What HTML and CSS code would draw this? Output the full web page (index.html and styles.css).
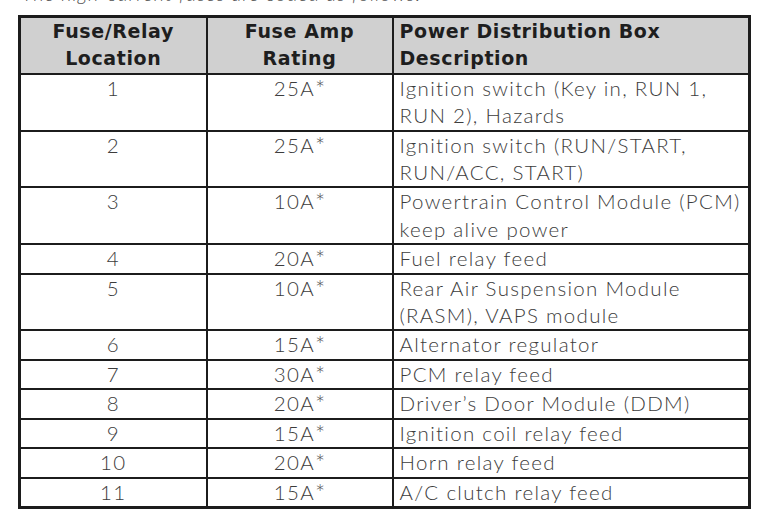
FILE: index.html
```html
<!DOCTYPE html>
<html>
<head>
<meta charset="utf-8">
<link rel="stylesheet" href="styles.css">
</head>
<body>
<p class="caption">The high-current fuses are coded as follows:</p>
<table class="fuses">
  <colgroup>
    <col class="c1"><col class="c2"><col class="c3">
  </colgroup>
  <thead>
    <tr>
      <th class="ctr">Fuse/Relay<br>Location</th>
      <th class="ctr">Fuse Amp<br>Rating</th>
      <th class="lft">Power Distribution Box<br>Description</th>
    </tr>
  </thead>
  <tbody>
    <tr><td class="ctr">1</td><td class="ctr">25A<span class="ast">*</span></td><td class="lft">Ignition switch (Key in, RUN 1,<br>RUN 2), Hazards</td></tr>
    <tr><td class="ctr">2</td><td class="ctr">25A<span class="ast">*</span></td><td class="lft">Ignition switch (RUN/START,<br>RUN/ACC, START)</td></tr>
    <tr><td class="ctr">3</td><td class="ctr">10A<span class="ast">*</span></td><td class="lft">Powertrain Control Module (PCM)<br>keep alive power</td></tr>
    <tr><td class="ctr">4</td><td class="ctr">20A<span class="ast">*</span></td><td class="lft">Fuel relay feed</td></tr>
    <tr><td class="ctr">5</td><td class="ctr">10A<span class="ast">*</span></td><td class="lft">Rear Air Suspension Module<br>(RASM), VAPS module</td></tr>
    <tr><td class="ctr">6</td><td class="ctr">15A<span class="ast">*</span></td><td class="lft">Alternator regulator</td></tr>
    <tr><td class="ctr">7</td><td class="ctr">30A<span class="ast">*</span></td><td class="lft">PCM relay feed</td></tr>
    <tr><td class="ctr">8</td><td class="ctr">20A<span class="ast">*</span></td><td class="lft">Driver’s Door Module (DDM)</td></tr>
    <tr><td class="ctr">9</td><td class="ctr">15A<span class="ast">*</span></td><td class="lft">Ignition coil relay feed</td></tr>
    <tr><td class="ctr">10</td><td class="ctr">20A<span class="ast">*</span></td><td class="lft">Horn relay feed</td></tr>
    <tr><td class="ctr">11</td><td class="ctr">15A<span class="ast">*</span></td><td class="lft">A/C clutch relay feed</td></tr>
  </tbody>
</table>
</body>
</html>
```
FILE: styles.css
```css
html, body {
  margin: 0;
  padding: 0;
  background: #ffffff;
}

body {
  font-family: Lato, "Liberation Sans", sans-serif;
  color: #3a3a3a;
}

.caption {
  margin: -17px 0 0 22px;
  height: 20px;
  font-size: 20px;
  line-height: 20px;
  font-style: italic;
  font-weight: 300;
  letter-spacing: 1px;
  color: #555;
}

.fuses {
  margin: 12px 0 0 18px;
  width: 733px;
  border-collapse: collapse;
  table-layout: fixed;
  border: 3px solid #1c1c1c;
}

.c1 { width: 187px; }
.c2 { width: 186px; }
.c3 { width: auto; }

.fuses th,
.fuses td {
  border: 2px solid #1c1c1c;
  padding: 0 6px;
  vertical-align: top;
  line-height: 27.4px;
}

.fuses th {
  background: #d0d0d0;
  font-family: "DejaVu Sans", sans-serif;
  font-weight: bold;
  font-size: 19px;
  color: #1e1e1e;
  letter-spacing: 0.6px;
}

.fuses td {
  font-family: Lato, "Liberation Sans", sans-serif;
  font-weight: 300;
  font-size: 20.5px;
  letter-spacing: 1.3px;
  color: #3c3c3c;
}

.ast {
  font-size: 24px;
  line-height: 0;
  letter-spacing: 0;
  position: relative;
  top: 2px;
  color: #555;
}

.ctr { text-align: center; }
.lft { text-align: left; }
```
